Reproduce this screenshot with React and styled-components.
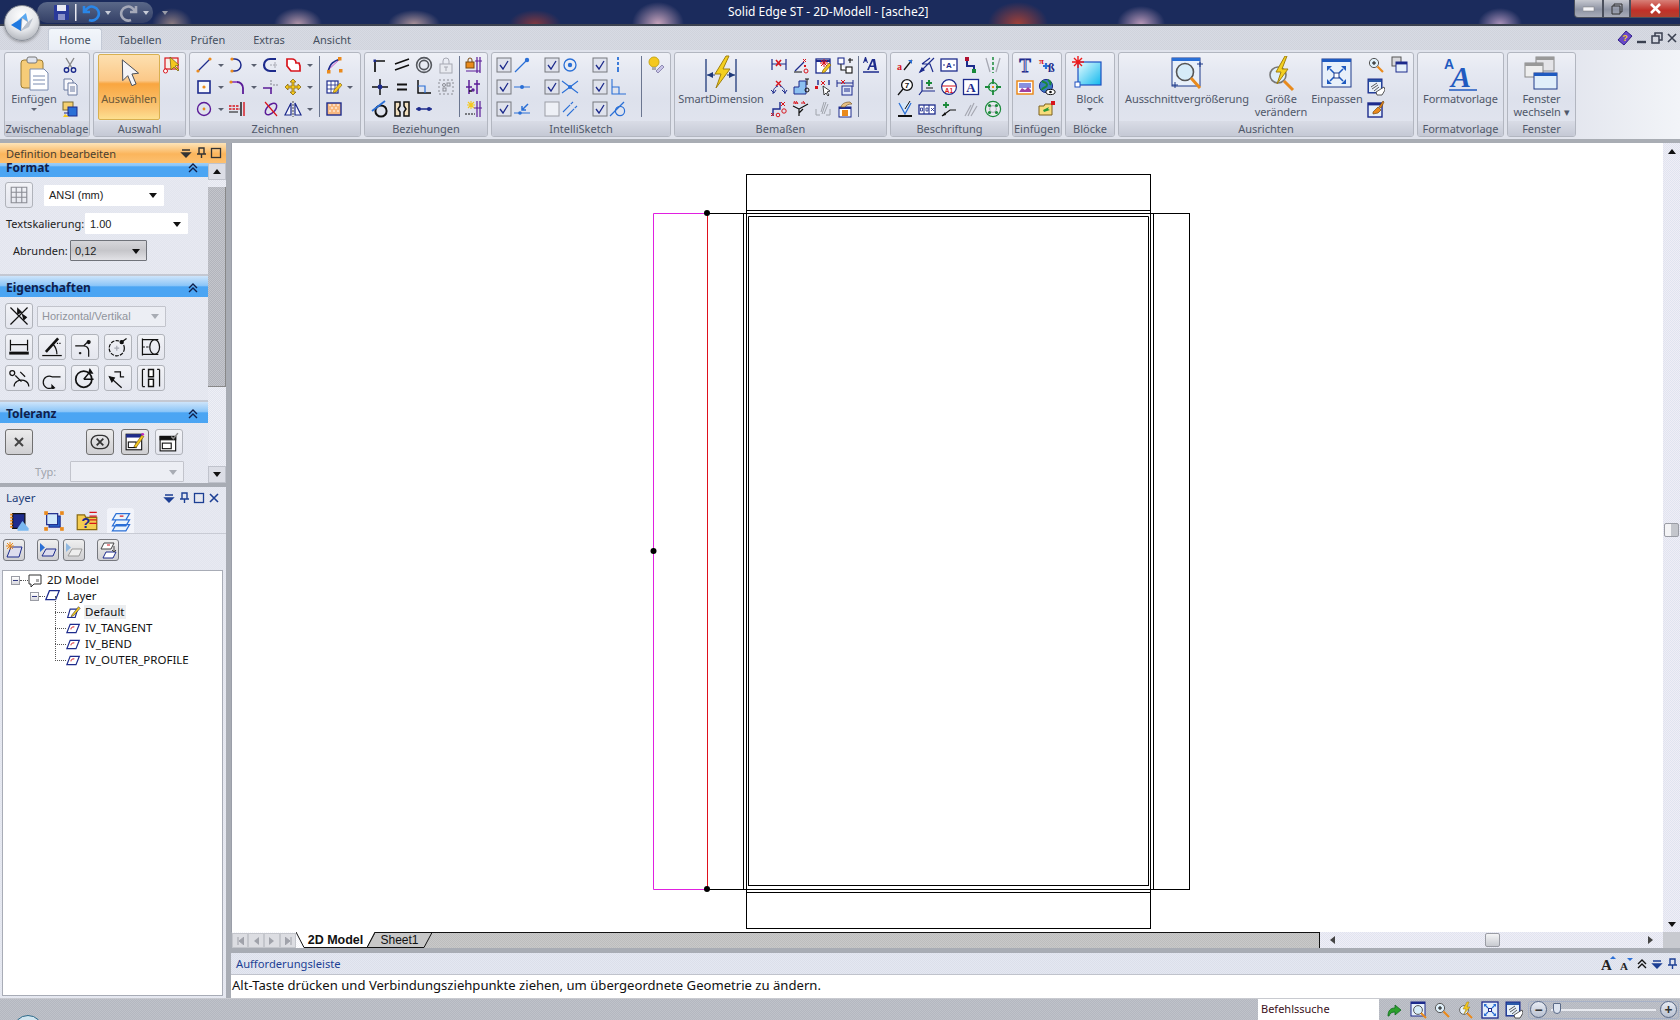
import React from 'react';
import styled, { createGlobalStyle } from 'styled-components';

// Farben der Icons
const N = '#1d2b8c';
const B = '#2a6fd6';
const R = '#d8141c';
const O = '#ea8a1c';
const P = '#5b1c98';
const K = '#111';
const G = '#a6a8b2';
const Y = '#f4c81e';
const T = '#1a8a3a';

const GlobalStyle = createGlobalStyle`
  html, body { margin: 0; height: 100%; overflow: hidden; }
  body { font-family: "Noto Sans", "Open Sans", sans-serif; font-size: 12px; color: #111; }
`;

const dither = (a, b) => `repeating-conic-gradient(${a} 0 25%, ${b} 0 50%) 0 0 / 2px 2px`;

const Page = styled.div`
  width: 1680px;
  height: 1020px;
  display: flex;
  flex-direction: column;
  position: relative;
  overflow: hidden;
  background: #d5d8e0;
`;

const TitleBar = styled.div`
  height: 26px;
  box-sizing: border-box;
  flex: none;
  display: grid;
  grid-template-columns: 728px 193px 1fr;
  border-bottom: 2px solid #3c4250;
  background:
    radial-gradient(ellipse 20px 16px at 172px 24px, #8a7a80 0, transparent 100%),
    radial-gradient(ellipse 24px 16px at 298px 24px, #b094a8 0, transparent 100%),
    radial-gradient(ellipse 26px 14px at 414px 24px, #a89098 0, transparent 100%),
    radial-gradient(ellipse 26px 14px at 535px 24px, #803840 0, transparent 100%),
    radial-gradient(ellipse 26px 22px at 658px 24px, #c8a4bc 0, transparent 100%),
    radial-gradient(ellipse 30px 22px at 1018px 24px, #a04038 0, transparent 100%),
    radial-gradient(ellipse 24px 18px at 1141px 24px, #b898b8 0, transparent 100%),
    radial-gradient(ellipse 22px 16px at 1500px 24px, #a890b8 0, transparent 100%),
    #1b2b5c;
`;

const QuickBar = styled.div`
  margin: 2px 0 1px 37px;
  width: 142px;
  height: 21px;
  display: flex;
  align-items: center;
  padding-left: 13px;
  gap: 3px;
`;

const QuickGlass = styled.div`
  display: flex;
  align-items: center;
  gap: 2px;
  width: 116px;
  height: 21px;
  margin-left: -13px;
  padding-left: 13px;
  border-radius: 10px;
  background: linear-gradient(#5a6888, #333f66);
  box-sizing: border-box;
`;

const QuickDrop = styled.span`
  width: 0;
  height: 0;
  border: 3px solid transparent;
  border-top: 4px solid ${({ $color }) => $color || '#c8ccd8'};
  margin: 4px 4px 0 2px;
`;

const WindowTitle = styled.div`
  color: #fff;
  font-size: 12px;
  line-height: 23px;
  text-align: center;
  white-space: nowrap;
`;

const WindowButtons = styled.div`
  display: flex;
  justify-content: flex-end;
  height: 18px;
`;

const WindowButton = styled.div`
  width: ${({ $w }) => $w}px;
  height: 18px;
  box-sizing: border-box;
  border: 1px solid #4a4f5c;
  border-top: none;
  display: flex;
  align-items: center;
  justify-content: center;
  background: ${({ $close }) =>
    $close ? 'linear-gradient(#d88078, #c03028 60%, #b04030)' : 'linear-gradient(#c6c8d0, #8e94a4 55%, #a8acb8)'};
  border-radius: ${({ $first }) => ($first ? '0 0 0 4px' : '0')};
`;

const Orb = styled.div`
  position: absolute;
  left: 4px;
  top: 5px;
  width: 36px;
  height: 36px;
  box-sizing: border-box;
  border-radius: 50%;
  border: 1px solid #8a8f98;
  background: radial-gradient(circle at 50% 30%, #fff 0, #e4e6ea 50%, #9a9ea6 100%);
  box-shadow: 0 1px 3px #5558;
  display: flex;
  align-items: center;
  justify-content: center;
  z-index: 3;
`;

const TabRow = styled.div`
  height: 24px;
  flex: none;
  display: flex;
  align-items: flex-end;
  padding-left: 48px;
  background: ${dither('#d8dbe4', '#d0d3dc')};
`;

const RibbonTab = styled.div`
  width: ${({ $w }) => $w}px;
  height: 22px;
  box-sizing: border-box;
  text-align: center;
  line-height: 23px;
  font-size: 11px;
  color: #46505f;
  border-radius: 3px 3px 0 0;
  ${({ $active }) => $active && `
    background: linear-gradient(#f2f6fb, #e9edf5);
    border: 1px solid #c4cad6;
    border-bottom: none;
    line-height: 21px;
  `}
`;

const HelpIcons = styled.div`
  margin-left: auto;
  display: flex;
  align-items: center;
  gap: 3px;
  height: 24px;
  padding-right: 2px;
`;

const Ribbon = styled.div`
  height: 93px;
  flex: none;
  box-sizing: border-box;
  display: flex;
  gap: 3px;
  padding: 2px 0 0 4px;
  border-bottom: 4px solid #a9adb4;
  background: linear-gradient(90deg, #e0e3ec 0, #e0e3ec 92%, #f2f4f8 100%);
`;

const Group = styled.div`
  width: ${({ $w }) => $w}px;
  height: 85px;
  box-sizing: border-box;
  flex: none;
  display: flex;
  flex-direction: column;
  border: 1px solid #b2b6c0;
  border-radius: 3px;
  background: linear-gradient(#eef0f6, #e6e9f2 20%, #dde1ec 55%, #e2e5ef);
  overflow: hidden;
`;

const GroupBody = styled.div`
  height: 68px;
  flex: none;
  display: flex;
  padding: 1px 0 0 ${({ $pad }) => $pad || 0}px;
  box-sizing: border-box;
`;

const GroupLabel = styled.div`
  flex: 1;
  text-align: center;
  font-size: 11px;
  line-height: 15px;
  color: #50586a;
  white-space: nowrap;
  background: linear-gradient(#d9dce6, #c5c9d5);
`;

const ToolCol = styled.div`
  width: ${({ $w }) => $w}px;
  flex: none;
  display: flex;
  flex-direction: column;
`;

const ToolCell = styled.div`
  height: 22px;
  display: flex;
  align-items: center;
  justify-content: center;
`;

const Caret = styled.span`
  width: 0;
  height: 0;
  border: 3px solid transparent;
  border-top: 3px solid #5a6070;
  margin-top: 3px;
`;

const Separator = styled.div`
  width: ${({ $w }) => $w}px;
  flex: none;
  display: flex;
  justify-content: center;
  padding-top: 2px;
  height: 61px;
  &::before {
    content: '';
    width: 1px;
    background: #6b7690;
  }
`;

const BigTool = styled.div`
  width: ${({ $w }) => $w}px;
  flex: none;
  display: flex;
  flex-direction: column;
  align-items: center;
  padding-top: 2px;
  box-sizing: border-box;
  ${({ $active }) => $active && `
    height: 66px;
    border: 1px solid #d8b050;
    border-radius: 2px;
    padding-top: 1px;
    background: linear-gradient(#fde0b0, #fbc888 40%, #f9a640 45%, #fbc878 85%, #fde090);
  `}
`;

const BigIcon = styled.div`
  height: 36px;
  display: flex;
  align-items: center;
  justify-content: center;
`;

const BigText = styled.div`
  font-size: 11px;
  letter-spacing: -0.1px;
  line-height: 13px;
  text-align: center;
  white-space: nowrap;
  color: ${({ $active }) => ($active ? '#6d5a3a' : '#50586a')};
`;

const Main = styled.div`
  flex: 1;
  display: flex;
  min-height: 0;
`;

const LeftColumn = styled.div`
  width: 231px;
  flex: none;
  display: flex;
  flex-direction: column;
  background: #a8acb4;
`;

const DockHeader = styled.div`
  width: 226px;
  height: 20px;
  flex: none;
  display: flex;
  align-items: center;
  padding: 0 4px 0 6px;
  box-sizing: border-box;
  font-size: 11px;
  color: #4a4030;
  background: linear-gradient(#fde4b8, #fbb55c 55%, #fcc070);
`;

const DockIcons = styled.div`
  margin-left: auto;
  display: flex;
  align-items: center;
  gap: 3px;
`;

const EditPanel = styled.div`
  width: 226px;
  height: 320px;
  flex: none;
  display: flex;
  overflow: hidden;
  background: ${dither('#e8eaf2', '#e2e5ee')};
`;

const PanelScroll = styled.div`
  flex: 1;
  overflow: hidden;
`;

const PanelContent = styled.div`
  margin-top: -9px;
`;

const SectionHead = styled.div`
  height: 23px;
  box-sizing: border-box;
  border-top: 2px solid #c4c8d2;
  display: flex;
  align-items: center;
  justify-content: space-between;
  padding: 2px 9px 0 6px;
  font-weight: 700;
  font-size: 12px;
  color: #10204c;
  background: linear-gradient(#cde4fa, #8cc6f8 45%, #4ba5f3 52%, #4ba5f3);
`;

const SectionBody = styled.div`
  height: ${({ $h }) => $h}px;
  box-sizing: border-box;
  padding: ${({ $top }) => $top}px 0 0 5px;
  display: flex;
  flex-direction: column;
`;

const FieldRow = styled.div`
  display: flex;
  align-items: center;
  height: ${({ $h }) => $h}px;
  margin-bottom: ${({ $mb }) => $mb || 0}px;
  padding-left: ${({ $pl }) => $pl || 0}px;
`;

const FieldLabel = styled.span`
  width: ${({ $w }) => $w}px;
  flex: none;
  font-size: 11px;
  white-space: nowrap;
  color: ${({ $off }) => ($off ? '#a0a4ac' : '#222')};
`;

const Select = styled.div`
  width: ${({ $w }) => $w}px;
  height: 21px;
  margin-left: ${({ $ml }) => $ml || 0}px;
  flex: none;
  box-sizing: border-box;
  display: flex;
  align-items: center;
  justify-content: space-between;
  padding: 0 6px 0 4px;
  font-family: "Liberation Sans", sans-serif;
  font-size: 11px;
  border-radius: 1px;
  background: ${({ $kind }) =>
    $kind === 'pressed' ? 'linear-gradient(#d6d6da, #c6c6ca 50%, #e2e2e6)' : $kind === 'off' ? '#eceef4' : '#fff'};
  border: 1px solid ${({ $kind }) => ($kind === 'pressed' ? '#70737a' : $kind === 'off' ? '#c2c4cc' : 'transparent')};
  color: ${({ $kind }) => ($kind === 'off' ? '#90949c' : '#222')};
`;

const SelectArrow = styled.span`
  width: 0;
  height: 0;
  border: 4px solid transparent;
  border-top: 5px solid ${({ $off }) => ($off ? '#a8acb4' : '#111')};
  margin-top: 5px;
`;

const SquareButton = styled.div`
  width: 28px;
  height: 26px;
  flex: none;
  box-sizing: border-box;
  display: flex;
  align-items: center;
  justify-content: center;
  border: 1px solid ${({ $dark }) => ($dark ? '#707070' : '#b0b3ba')};
  border-radius: 3px;
  background: ${({ $dark }) => ($dark ? 'linear-gradient(#ececec, #cfcfd2)' : 'linear-gradient(#f2f3f7, #e4e6ee)')};
  margin-left: ${({ $ml }) => $ml || 0}px;
`;

const ButtonRow = styled.div`
  display: flex;
  gap: 5px;
  margin-bottom: 5px;
`;

const PanelScrollbar = styled.div`
  width: 18px;
  flex: none;
  display: flex;
  flex-direction: column;
  background: ${dither('#eef0f6', '#e2e4ee')};
`;

const ScrollButton = styled.div`
  height: 17px;
  flex: none;
  display: flex;
  align-items: center;
  justify-content: center;
  background: #dcdee6;
  border: 1px solid #c0c3cc;
  box-sizing: border-box;
`;

const ScrollThumb = styled.div`
  height: 200px;
  margin-top: 7px;
  flex: none;
  background: ${dither('#c4c6cc', '#b2b4bc')};
  border-right: 1px solid #888;
  border-bottom: 1px solid #888;
  box-sizing: border-box;
`;

const ScrollFill = styled.div`
  flex: 1;
`;

const Arrow = styled.span`
  width: 0;
  height: 0;
  border: 4px solid transparent;
  ${({ $dir }) => ($dir === 'up' ? 'border-bottom: 5px solid #111; margin-bottom: 4px;' : '')}
  ${({ $dir }) => ($dir === 'down' ? 'border-top: 5px solid #111; margin-top: 4px;' : '')}
  ${({ $dir }) => ($dir === 'left' ? 'border-right: 5px solid #444; margin-right: 4px;' : '')}
  ${({ $dir }) => ($dir === 'right' ? 'border-left: 5px solid #444; margin-left: 4px;' : '')}
`;

const LayerPanel = styled.div`
  flex: 1;
  width: 226px;
  margin-top: 4px;
  display: flex;
  flex-direction: column;
  min-height: 0;
  background: ${dither('#e8eaf2', '#e2e5ee')};
`;

const LayerHeader = styled.div`
  height: 21px;
  flex: none;
  display: flex;
  align-items: center;
  padding: 0 6px;
  font-size: 11.5px;
  color: #24407a;
`;

const LayerTabs = styled.div`
  height: 26px;
  flex: none;
  display: flex;
  padding-left: 8px;
  border-bottom: 1px solid #c8cbd4;
  box-sizing: border-box;
`;

const LayerTab = styled.div`
  width: ${({ $w }) => $w}px;
  margin-left: ${({ $ml }) => $ml || 0}px;
  display: flex;
  align-items: center;
  justify-content: center;
  border-radius: 3px 3px 0 0;
  background: ${({ $active }) => ($active ? '#f2f4fa' : 'transparent')};
`;

const LayerTools = styled.div`
  height: 36px;
  flex: none;
  display: flex;
  align-items: flex-start;
  padding: 5px 0 0 3px;
  box-sizing: border-box;
`;

const ToolButton = styled.div`
  width: 22px;
  height: 22px;
  box-sizing: border-box;
  margin-left: ${({ $ml }) => $ml || 0}px;
  display: flex;
  align-items: center;
  justify-content: center;
  border: 1px solid #76787e;
  border-radius: 3px;
  background: linear-gradient(#efefef, #cfcfd2);
`;

const Tree = styled.div`
  flex: 1;
  margin: 0 3px 2px 2px;
  padding-top: 1px;
  background: #fff;
  border: 1px solid #a8acb6;
  box-sizing: border-box;
`;

const TreeRow = styled.div`
  height: 16px;
  display: flex;
  align-items: center;
  position: relative;
  padding-left: ${({ $indent }) => $indent}px;
  ${({ $guide }) => $guide && `
    &::before {
      content: '';
      position: absolute;
      left: 52px;
      top: -8px;
      height: ${$guide}px;
      border-left: 1px dotted #555;
    }
  `}
`;

const Expander = styled.span`
  width: 9px;
  height: 9px;
  box-sizing: border-box;
  border: 1px solid #9a9ca4;
  background: linear-gradient(#fff, #d8d8de);
  position: relative;
  flex: none;
  &::after {
    content: '';
    position: absolute;
    left: 1px;
    right: 1px;
    top: 3px;
    height: 1px;
    background: #333a80;
  }
`;

const Dots = styled.span`
  width: ${({ $w }) => $w}px;
  flex: none;
  border-top: 1px dotted #555;
`;

const TreeLabel = styled.span`
  margin-left: ${({ $ml }) => $ml}px;
  padding: 0 1px;
  font-size: 11.5px;
  line-height: 14px;
  background: ${({ $sel }) => ($sel ? '#eceef0' : 'transparent')};
`;

const RightColumn = styled.div`
  flex: 1;
  display: flex;
  flex-direction: column;
  min-width: 0;
  background: #a8acb4;
`;

const CanvasRow = styled.div`
  flex: 1;
  display: flex;
  min-height: 0;
`;

const Canvas = styled.div`
  flex: 1;
  background: #fff;
  border-left: 1px solid #9a9ea8;
  box-sizing: border-box;
  overflow: hidden;
`;

const VScroll = styled.div`
  width: 17px;
  flex: none;
  display: flex;
  flex-direction: column;
  align-items: stretch;
  background: ${dither('#f0eef6', '#e0e4f0')};
`;

const VScrollEnd = styled.div`
  height: 16px;
  display: flex;
  align-items: center;
  justify-content: center;
`;

const VThumb = styled.div`
  height: 14px;
  margin: 364px 1px 0;
  box-sizing: border-box;
  border: 1px solid #9a9ca4;
  border-radius: 2px;
  background: linear-gradient(90deg, #f4f4f6 50%, #c4c6cc 50%);
`;

const SheetStrip = styled.div`
  height: 16px;
  flex: none;
  display: flex;
  background: ${dither('#fff', '#f4f4fa')};
  margin-left: 1px;
`;

const SheetNav = styled.div`
  width: 16px;
  height: 15px;
  margin-top: 1px;
  flex: none;
  display: flex;
  align-items: center;
  justify-content: center;
  box-sizing: border-box;
  border: 1px solid #c4c6cc;
  background: #dcdde2;
`;

const SheetTab = styled.div`
  width: ${({ $w }) => $w}px;
  margin-left: ${({ $ml }) => $ml || 0}px;
  box-sizing: border-box;
  height: 16px;
  flex: none;
  position: relative;
  text-align: center;
  line-height: 16px;
  font-family: "Liberation Sans", sans-serif;
  font-size: ${({ $active }) => ($active ? '12.5px' : '12px')};
  font-weight: ${({ $active }) => ($active ? 700 : 400)};
  z-index: ${({ $active }) => ($active ? 2 : 1)};
  & > svg {
    position: absolute;
    left: 0;
    top: 0;
    z-index: -1;
  }
`;

const SheetFill = styled.div`
  flex: 1;
  border-top: 1px solid #111;
  border-right: 1px solid #111;
  margin-left: -8px;
  background: ${dither('#bdbdbd', '#c9c9c9')};
`;

const HScroll = styled.div`
  width: 343px;
  flex: none;
  display: flex;
  align-items: center;
  justify-content: space-between;
  padding: 0 6px;
  box-sizing: border-box;
  position: relative;
  background: ${dither('#f0eef6', '#e0e4f0')};
`;

const HThumb = styled.div`
  position: absolute;
  left: 165px;
  top: 1px;
  width: 15px;
  height: 14px;
  box-sizing: border-box;
  border: 1px solid #9a9ca4;
  border-radius: 2px;
  background: linear-gradient(#f4f4f6, #c8cad0);
`;

const Corner = styled.div`
  width: 17px;
  flex: none;
  background: #c8cad0;
`;

const PromptHead = styled.div`
  height: 22px;
  flex: none;
  margin-top: 5px;
  display: flex;
  align-items: center;
  padding: 0 2px 0 5px;
  font-size: 11.2px;
  color: #1c3f94;
  border-bottom: 1px solid #c0c3cc;
  box-sizing: border-box;
  background: ${dither('#e4e8f2', '#dcdfea')};
`;

const PromptIcons = styled.div`
  margin-left: auto;
  display: flex;
  align-items: center;
  gap: 3px;
`;

const PromptText = styled.div`
  height: 23px;
  flex: none;
  background: #fff;
  font-size: 13.1px;
  line-height: 21px;
  padding-left: 1px;
  white-space: nowrap;
  color: #111;
`;

const StatusBar = styled.div`
  height: 22px;
  flex: none;
  display: flex;
  align-items: center;
  justify-content: flex-end;
  position: relative;
  border-top: 1px solid #c8cad0;
  box-sizing: border-box;
  background: ${dither('#c0c3ca', '#b4b7c0')};
`;

const StartOrb = styled.div`
  position: absolute;
  left: 13px;
  top: 16px;
  width: 28px;
  height: 28px;
  border: 1px solid #2b6a8a;
  border-radius: 50%;
  background: #d0e4ee;
`;

const SearchBox = styled.div`
  width: 121px;
  height: 21px;
  margin-right: 6px;
  padding-left: 3px;
  box-sizing: border-box;
  background: #fff;
  color: #3a1020;
  font-size: 11px;
  line-height: 20px;
`;

const StatusIcons = styled.div`
  display: flex;
  align-items: center;
  gap: 6px;
`;

const ZoomSlider = styled.div`
  width: 151px;
  height: 18px;
  margin: 0 1px 0 5px;
  display: flex;
  align-items: center;
  position: relative;
  box-sizing: border-box;
  border: 1px solid #a8b2c8;
  border-radius: 3px;
  padding: 0 1px;
  justify-content: space-between;
`;

const SliderTrack = styled.div`
  position: absolute;
  left: 22px;
  right: 22px;
  top: 7px;
  height: 2px;
  background: #e8eaf0;
`;

const SliderKnob = styled.div`
  position: absolute;
  left: 24px;
  top: 1px;
  width: 8px;
  height: 11px;
  box-sizing: border-box;
  border: 1px solid #5a6a88;
  border-radius: 1px 1px 4px 4px;
  background: #dde4f0;
`;

const ZoomCircle = styled.div`
  width: 15px;
  height: 15px;
  border-radius: 50%;
  border: 1px solid #5a6a88;
  background: linear-gradient(#e8ecf4, #b8c0d0);
  display: flex;
  align-items: center;
  justify-content: center;
  font-weight: 700;
  font-size: 14px;
  line-height: 14px;
  color: #333;
  z-index: 1;
`;

// kleine Helfer für die Icons
const dot = (x, y, c = O, r = 1.6) => <circle cx={x} cy={y} r={r} fill={c} stroke="none" />;
const pen = <path d="M9 14l6-7 2 2-6 7-3 1z" fill={Y} stroke="#7a5a10" strokeWidth=".7" />;
const lens = (
  <g>
    <circle cx="7" cy="7" r="4.6" fill="#dff0fa" stroke="#555" />
    <path d="M10.5 10.5L16 16" stroke={O} strokeWidth="2.2" />
  </g>
);

const ICONS = {
  cut: <g stroke={N}><path d="M5 2l6 10M13 2L7 12" stroke="#888" strokeWidth="1.4" /><circle cx="5.5" cy="14" r="2.2" strokeWidth="1.4" /><circle cx="12.5" cy="14" r="2.2" strokeWidth="1.4" /></g>,
  copy: <g stroke="#6a7aa0" fill="#f8f8fc"><path d="M3 1h7l2 2v9H3z" /><path d="M7 5h7l2 2v10H7z" /><path d="M9 9h5M9 11h5M9 13h5" fill="none" /></g>,
  pasteSmall: <g><rect x="2" y="2" width="10" height="8" fill="#f5d070" stroke="#7a6a30" /><rect x="7" y="7" width="9" height="9" fill="#2a6fd6" stroke={N} /><path d="M3 13h5" stroke={N} /><path d="M4 14l-2 3h6z" fill={Y} stroke="none" /></g>,
  selectRed: <g><rect x="3" y="2" width="13" height="11" fill="#f8eee8" stroke={R} strokeWidth="1.2" /><circle cx="3.5" cy="15" r="2" stroke={R} fill="#fff" /><path d="M8 1l1 13 3-3 4 4 1-1-4-4 4-1z" fill={Y} stroke="#6a5a10" strokeWidth=".7" /></g>,

  line: <g><path d="M3 15L15 3" stroke={N} strokeWidth="1.3" />{dot(3, 15)}{dot(15, 3)}</g>,
  arc: <g><path d="M5 3h2a6 6 0 0 1 0 12H5" stroke={N} strokeWidth="1.5" />{dot(4, 3, O)}{dot(4, 15, O)}</g>,
  cshape: <g><path d="M14 3H8a6 6 0 0 0 0 12h6" stroke={N} strokeWidth="2.2" /><path d="M8 9h7" stroke={G} strokeDasharray="2 1" /><path d="M13 6v6" stroke={G} /></g>,
  redshape: <path d="M3 3h5a4 4 0 0 1 4 4h3l1 3v5H7L3 10z" stroke={R} strokeWidth="1.7" fill="#fff" />,
  curve: <g><path d="M2 15L16 2" stroke="#c028c0" strokeWidth=".8" /><path d="M3 16C5 7 9 5 15 3" stroke={N} strokeWidth="1.6" /><rect x="13" y="1" width="3.5" height="3.5" fill={O} /><rect x="2" y="14" width="3.5" height="3.5" fill={O} /><rect x="14" y="13" width="3.5" height="3.5" fill={O} /></g>,
  rectdot: <g><rect x="3" y="3" width="12" height="12" stroke={N} strokeWidth="1.6" fill="#f6f8fc" />{dot(9, 9)}</g>,
  fillet: <g><path d="M2 4h7a6 6 0 0 1 6 6v6" stroke={P} strokeWidth="1.8" /><path d="M2 4h7" stroke="#9a5cc8" strokeWidth="1.8" />{dot(3, 4)}</g>,
  trim: <g stroke={P} strokeWidth="1.6"><path d="M1 10h9M9 10v6" /><path d="M9 2v6" strokeDasharray="2 1" stroke={G} /><path d="M11 7h6" strokeDasharray="2 1" stroke={G} /></g>,
  move: <path d="M9 1l3 3h-2v4h4V6l3 3-3 3v-2h-4v4h2l-3 3-3-3h2v-4H4v2L1 9l3-3v2h4V4H6z" fill={Y} stroke="#8a6a10" strokeWidth=".8" />,
  tablePen: <g><rect x="2" y="3" width="11" height="12" fill="#fff" stroke={N} strokeWidth="1.2" /><path d="M2 7h11M2 11h11M6 3v12M10 3v12" stroke={N} strokeWidth=".8" /><path d="M9 12l6-7 2 2-6 7-3 1z" fill={Y} stroke="#7a5a10" strokeWidth=".6" /></g>,
  circle: <g><circle cx="9" cy="9" r="6.5" stroke={P} strokeWidth="1.4" />{dot(9, 9, O, 1.4)}</g>,
  extend: <g><path d="M1 6h10M1 9h11" stroke={R} strokeWidth="1.3" strokeDasharray="2.5 1" /><path d="M1 12h9" stroke={K} /><path d="M13 2v14" stroke={K} strokeWidth="1.4" /><path d="M16 2v14" stroke={R} strokeWidth="1.4" /></g>,
  slash: <g><ellipse cx="9" cy="9" rx="7" ry="4" transform="rotate(-45 9 9)" stroke={P} strokeWidth="1.5" /><path d="M3 2l12 14" stroke={R} strokeWidth="1.2" /></g>,
  mirror: <g stroke={N} strokeWidth="1.2"><path d="M7 3v12H1zM11 3v12h6z" fill="#f0f2fa" /><path d="M9 1v16" stroke="#666" strokeDasharray="2 1" /></g>,
  hatch: <g><rect x="2" y="3" width="14" height="12" fill="#f8b880" stroke={N} strokeWidth="1.4" /><path d="M4 5h2M8 5h2M12 5h2M6 8h2M10 8h2M4 11h2M8 11h2M12 11h2" stroke="#fff" /></g>,

  corner: <g stroke={K} strokeWidth="1.7"><path d="M4 16V5h10" /><rect x="2.5" y="3.5" width="2.5" height="2.5" fill={N} stroke="none" /></g>,
  parallel: <path d="M2 8l14-5M2 14l14-5" stroke={K} strokeWidth="1.5" />,
  rings: <g stroke="#55585e" strokeWidth="1.6"><circle cx="9" cy="9" r="7.4" /><circle cx="9" cy="9" r="4.6" /></g>,
  lockGray: <g stroke={G}><rect x="3" y="8" width="12" height="9" fill="#e8eaf0" /><path d="M6 8V5a3 3 0 0 1 6 0v3" /><path d="M7 11h4M9 11v4" /></g>,
  crossDots: <g><path d="M1 9h16M9 1v16" stroke={K} strokeWidth="1.5" />{dot(9, 9, N, 2.4)}</g>,
  equal: <path d="M4 6.5h10M4 11.5h10" stroke={K} strokeWidth="2.2" />,
  angle: <g><path d="M3 2v13h13" stroke={K} strokeWidth="1.5" /><path d="M3 8h7v7" stroke={B} strokeWidth="1.2" /></g>,
  dashRect: <g stroke="#8a8c94"><rect x="2" y="2" width="14" height="14" strokeDasharray="2 2" /><circle cx="7" cy="7" r="1.5" /><rect x="10" y="5" width="3" height="3" /><rect x="6" y="10" width="3" height="3" /></g>,
  tangent: <g><circle cx="10" cy="11" r="5.6" stroke={K} strokeWidth="2" /><path d="M1 11L14 1" stroke={B} strokeWidth="1.8" /></g>,
  symmetric: <g stroke={K} strokeWidth="1.5" fill="#f2e0c0"><path d="M2 2h5v4l-2 3 2 3v4H2zM16 2h-5v4l2 3-2 3v4h5z" /></g>,
  collinear: <g><path d="M1 9h16" stroke={N} strokeWidth="1.4" />{dot(4, 9, N, 2)}{dot(14, 9, N, 2)}</g>,
  lockPurple: <g><rect x="2" y="6" width="8" height="6" fill={O} stroke="#7a4a10" /><path d="M4 6V4a2 2 0 0 1 4 0v2" stroke="#7a4a10" /><path d="M13 1v16M16 1v16M2 15h14M11 5h7" stroke={P} strokeWidth="1.2" /></g>,
  barsPurple: <g stroke={P} strokeWidth="1.5"><path d="M5 2v14M13 2v14" /><path d="M2 9h6M10 6h6" /><path d="M5 13h3" stroke={K} /><circle cx="9" cy="12" r="1" /></g>,
  sunPurple: <g><path d="M7 1v8M3 5h8M4 2l6 6M10 2L4 8" stroke={Y} strokeWidth="1.1" /><path d="M13 1v16M16 1v16M10 8h8" stroke={P} strokeWidth="1.2" /><path d="M1 14h10" stroke={K} strokeDasharray="2 1" /></g>,

  checked: <g><rect x="2" y="2" width="14" height="14" fill="#dfe2ec" stroke="#76787e" /><path d="M5 9l3 4 5-8" stroke={N} strokeWidth="1.3" /></g>,
  unchecked: <rect x="2" y="2" width="14" height="14" fill="#eef0f6" stroke="#9c9ea6" />,
  isLine: <g><path d="M2 16L14 4" stroke={B} strokeWidth="1.2" />{dot(14, 4, B, 2.2)}</g>,
  isMid: <g><path d="M1 9h16" stroke={B} strokeWidth="1.2" />{dot(9, 9, B, 2)}</g>,
  isOn: <g><path d="M1 13h16" stroke={B} strokeWidth="1.2" />{dot(7, 13, B, 1.8)}<path d="M15 4L9 10M9 6v4h4" stroke={B} strokeWidth="1.5" /></g>,
  isCenter: <g><circle cx="9" cy="9" r="6" stroke={B} strokeWidth="1.3" />{dot(9, 9, B, 2.2)}</g>,
  isCross: <g><path d="M1 3l16 12M1 15L17 3" stroke={B} strokeWidth="1.1" />{dot(9, 9, B, 2)}</g>,
  isPar: <path d="M2 12L12 2M6 16L16 6" stroke={B} strokeWidth="1.1" strokeDasharray="10 1" />,
  isDots: <g stroke={B} strokeWidth="1.8"><path d="M9 1v3M9 6v3M9 11v5" /></g>,
  isPerp: <g stroke={B} strokeWidth="1.1"><path d="M3 1v15h14" /><path d="M3 9h7v7" /></g>,
  isTan: <g stroke={B} strokeWidth="1.2"><circle cx="11" cy="11" r="4.6" /><path d="M1 16L15 2" /></g>,
  bulb: <g><circle cx="7" cy="6" r="5" fill={Y} stroke="#c8a818" /><rect x="5" y="11" width="4" height="3" fill="#aaa" /><path d="M9 15l6-6 2 2-6 6z" fill="#c8c4e8" stroke="#706a9a" strokeWidth=".7" /></g>,

  d1: <g><path d="M2 3v11M16 3v11M2 8h14" stroke={N} strokeWidth="1.2" /><path d="M6 4l5 6M11 4l-5 6" stroke={R} strokeWidth="1.6" /></g>,
  d2: <g><path d="M3 15l9-9" stroke={N} strokeWidth="1.2" /><path d="M2 16h8" stroke={K} /><path d="M11 3l3 3M14 3l-3 3M12 9l2 2M14 9l-2 2" stroke={R} /><circle cx="14" cy="15" r="2" stroke={R} /></g>,
  d3: <g><rect x="2" y="3" width="14" height="14" stroke={N} strokeWidth="1.3" fill="#fff" /><path d="M2 5h14" stroke={N} strokeWidth="2" /><path d="M10 3v8M6 7h8M7 4l6 6M13 4l-6 6" stroke={R} />{pen}</g>,
  d4: <g stroke={K} strokeWidth="1.1" fill="#fff"><rect x="2" y="2" width="6" height="6" stroke={N} /><rect x="10" y="11" width="6" height="6" /><path d="M5 8v6h5M12 4h5M14 2v5" /></g>,
  d5: <g><path d="M6 3l5 5M11 3L6 8" stroke={R} strokeWidth="1.4" /><path d="M3 16C3 11 5 9 8 8M15 16c0-5-2-7-5-8M1 12l3 3 2-3M12 12l3 3 2-3" stroke={N} /></g>,
  d6: <g><path d="M2 16V9h5V3h7v13z" fill="#8cc0f0" stroke={N} /><path d="M15 1v6M13 1h4" stroke={K} /><circle cx="15" cy="12" r="2" stroke={K} /></g>,
  d7: <g><path d="M4 2v5M15 2v5M1 9h1" stroke={N} strokeWidth="1.4" /><rect x="1" y="8" width="3" height="3" fill={R} /><path d="M7 3l4 4M11 3L7 7" stroke={R} /><path d="M9 8l1 9 2-2 2 3 1-1-2-3 3-1z" fill="#fff" stroke={K} strokeWidth=".8" /></g>,
  d8: <g><path d="M1 2v7M17 2v7M1 5h16" stroke={N} /><path d="M5 2l4 4M9 2L5 6" stroke={R} /><rect x="6" y="8" width="10" height="9" fill="#dde4f6" stroke={N} /><path d="M8 11h6M8 13h6" stroke={N} /></g>,
  d9: <g><path d="M3 16V9h7V2" stroke={N} strokeWidth="1.4" /><path d="M11 2l4 4M15 2l-4 4" stroke={R} /><circle cx="14" cy="11" r="2.2" stroke={R} /><path d="M1 13l3 3M4 13l-3 3" stroke={R} /><circle cx="8" cy="15" r="1.8" stroke={R} /></g>,
  d10: <g><path d="M1 3h5M4 1l2 3M2 1l2 3M9 3h4M11 1l2 3" stroke={R} /><path d="M7 16V9l9-5M1 6l6 3M11 9l-4 4" stroke={K} strokeWidth="1.2" /></g>,
  d11: <g stroke="#a0a4ac"><path d="M2 15V9M16 15V9M2 15h4M12 15h4" /><path d="M8 14L12 2M10 14l4-10M7 12L10 2" /></g>,
  d12: <g><rect x="3" y="7" width="12" height="10" fill="#fff" stroke={N} /><rect x="3" y="7" width="12" height="2" fill={N} /><rect x="6" y="10" width="6" height="6" fill={O} /><path d="M5 7c1-4 5-5 9-5l2 2c-3 0-6 1-7 3z" fill="#e8c080" stroke="#7a5a30" strokeWidth=".7" /></g>,
  styleSmall: <g fill={N}><path d="M3 1l-2 6h1l.5-1.5h2L5 7h1L4 1z" /><path d="M10 3L5 14h2l1-3h4l.5 3h2.5L13 3zM8.8 9.5L11 5l.6 4.5z" /><path d="M1 16h16" stroke={N} strokeWidth="1.3" /></g>,

  b1: <g><path d="M8 14L16 4" stroke={K} strokeWidth="1.3" /><text x="1" y="14" fontSize="10" fontWeight="700" fill={R} stroke="none" fontFamily="Liberation Serif">a</text><path d="M12 4h4v4" fill={B} /></g>,
  b2: <g stroke={N} strokeWidth="1.2"><path d="M2 16L16 2M4 8h8l3 8M4 8l8-6" /><path d="M2 16l4-2-2-2z" fill={N} /></g>,
  b3: <g><rect x="1" y="3" width="16" height="12" fill="#fff" stroke={N} strokeWidth="1.3" /><path d="M3 9h2M13 9h2" stroke={N} /><text x="9" y="12" textAnchor="middle" fontSize="8" fill={N} stroke="none" fontFamily="Liberation Sans" fontWeight="700">A</text></g>,
  b4: <g><path d="M5 4v6h7v5" stroke={N} strokeWidth="2" /><rect x="3" y="1" width="4" height="4" fill="#b01030" /><rect x="10" y="13" width="4" height="4" fill={T} /></g>,
  b5: <g><path d="M2 2l4 14M16 2l-4 14" stroke={G} strokeWidth="1.3" /><path d="M9 1v16" stroke={T} strokeWidth="1.5" strokeDasharray="3 2" /></g>,
  b6: <g><circle cx="11" cy="7" r="5.4" fill="#fff" stroke={K} strokeWidth="1.3" /><path d="M7 11l-5 6" stroke={K} strokeWidth="1.3" /><text x="11" y="10" textAnchor="middle" fontSize="8" fontWeight="700" fill={K} stroke="none" fontFamily="Liberation Sans">7</text></g>,
  b7: <g><path d="M4 2v11l-3 4M4 13h13" stroke={N} strokeWidth="1.2" /><path d="M11 2v6M8 5h6" stroke={T} strokeWidth="2" /><path d="M8 10h7" stroke={K} /></g>,
  b8: <g><circle cx="9" cy="9" r="7.4" fill="#fff" stroke={N} strokeWidth="1.2" /><path d="M2 8h14" stroke={R} /><text x="9" y="15" textAnchor="middle" fontSize="6.5" fontWeight="700" fill={R} stroke="none" fontFamily="Liberation Sans">A1</text></g>,
  b9: <g><rect x="1.5" y="1.5" width="15" height="15" fill="#fff" stroke={N} strokeWidth="1.3" /><text x="9" y="14" textAnchor="middle" fontSize="13" fontWeight="700" fill={N} stroke="none" fontFamily="Liberation Serif">A</text></g>,
  b10: <g stroke={T} strokeWidth="1.4"><circle cx="9" cy="9" r="4.4" /><path d="M9 1v5M9 12v5M1 9h5M12 9h5" strokeWidth="1.8" /><path d="M8 9h2" stroke={O} strokeWidth="2" /></g>,
  b11: <g><path d="M3 3l6 11 6-11" stroke={B} strokeWidth="1.3" fill="#d8e8f8" /><path d="M2 16h14" stroke={K} strokeWidth="2" /><path d="M14 1L9 9" stroke={K} /></g>,
  b12: <g><rect x="1" y="5" width="16" height="9" fill="#fff" stroke={N} strokeWidth="1.3" /><path d="M6 5v9M11 5v9" stroke={N} /><path d="M2.5 8h2v3h-2zM8 8h2v3H8zM13 8l3 3M16 8l-3 3" stroke={N} strokeWidth=".8" /></g>,
  b13: <g><path d="M6 2v6M3 5h6" stroke={T} strokeWidth="1.8" /><path d="M2 16l8-6h6" stroke={K} strokeWidth="1.2" /><path d="M2 16l4-1-1-3z" fill={K} /></g>,
  b14: <g stroke={G} strokeWidth="1.2"><path d="M6 16L12 3M3 16L9 5M9 16l6-10" /></g>,
  b15: <g><circle cx="9" cy="9" r="7.6" fill="#e8eaf0" stroke={T} strokeWidth="1.2" /><circle cx="9" cy="9" r="3.4" stroke={G} />{dot(5.5, 5.5, T)}{dot(12.5, 5.5, T)}{dot(5.5, 12.5, T)}{dot(12.5, 12.5, T)}</g>,

  textT: <text x="9" y="16" textAnchor="middle" fontSize="19" fill="#fff" stroke={N} strokeWidth=".9" fontFamily="Liberation Serif">T</text>,
  piBeta: <g><text x="1" y="8" fontSize="9" fontWeight="700" fill={R} stroke="none" fontFamily="Liberation Serif">π</text><path d="M5 10h6M8 7v6" stroke={B} strokeWidth="2.2" /><text x="10" y="16" fontSize="12" fontWeight="700" fill={N} stroke="none" fontFamily="Liberation Serif">ß</text></g>,
  picture: <g><rect x="1" y="3" width="16" height="13" fill="#fff" stroke={O} strokeWidth="1.5" /><rect x="3" y="5" width="12" height="5" fill="#8890e0" /><path d="M3 14l3-4 3 2 3-3 3 3v2z" fill="#a040a0" /></g>,
  globe: <g><circle cx="8" cy="8" r="6.6" fill="#3a7ac0" stroke={N} /><path d="M4 3c2 2 5 1 5 4s-5 2-5 5M10 2c2 1 3 3 2 5" stroke={T} strokeWidth="2" /><ellipse cx="12.5" cy="14" rx="4.6" ry="2.6" fill="#fff" stroke={K} /><circle cx="12.5" cy="14" r="1.3" fill={K} /></g>,
  folderRed: <g><path d="M1 6h5l1-2h7v11H1z" fill="#f8dc7c" stroke="#7a6020" /><path d="M5 10l6-3-1 2 2 1-6 2z" fill="#2a9a3a" /><rect x="13" y="1" width="4" height="4" fill={R} /></g>,

  zoomPM: <g>{lens}<path d="M5 7h4M7 5v4" stroke={K} /></g>,
  windowsSm: <g><rect x="2" y="1" width="9" height="9" fill="#d8d8dc" stroke="#555" /><rect x="6" y="6" width="11" height="10" fill="#e6f0fa" stroke={N} /><rect x="6" y="6" width="11" height="2.4" fill={N} /></g>,
  handWin: <g><rect x="1" y="1" width="14" height="14" fill="#2a5aa8" stroke={N} /><rect x="2" y="4" width="12" height="10" fill="#e6f0fa" /><path d="M4 9l6-4M5 11l6-4M7 13l5-4M9 14l8-5 1 3-3 5h-5z" stroke="#333" fill="#fff" strokeWidth=".8" /></g>,
  brushWin: <g><rect x="1" y="3" width="14" height="14" fill="#e6f0fa" stroke={N} strokeWidth="1.4" /><rect x="1" y="3" width="14" height="2.4" fill={N} /><path d="M6 12l5-5 3 3-3 3-5 1zM12 7l4-6 1 1-3 6z" fill={O} stroke="#7a4a10" strokeWidth=".7" /></g>,

  redoGreen: <path d="M3 15c0-5 2-8 7-8V4l6 5-6 5v-3c-3 0-5 1-6 4z" fill="#2ca02c" stroke="#106a20" strokeWidth=".8" />,
  zoomArea: <g><rect x="2" y="1" width="14" height="14" fill="#e6f0fa" stroke={N} /><rect x="2" y="1" width="14" height="2" fill={N} /><circle cx="9" cy="9" r="4.4" fill="#d8eef8" stroke="#555" /><path d="M12 12l5 5" stroke={O} strokeWidth="2" /></g>,
  zoomBolt: <g><circle cx="7" cy="9" r="4.4" fill="#e8f4fc" stroke="#666" /><path d="M10 12l5 5" stroke={O} strokeWidth="2" /><path d="M10 1L6 8h3l-2 5 6-7h-3l2-5z" fill={Y} stroke="#a08010" strokeWidth=".5" /></g>,
  fitSm: <g><rect x="1" y="1" width="16" height="16" fill="#e4eefa" stroke={N} strokeWidth="1.3" /><path d="M4 4l3 3M14 4l-3 3M4 14l3-3M14 14l-3-3" stroke={B} strokeWidth="1.2" /><path d="M3 3h3L3 6zM15 3h-3l3 3zM3 15h3l-3-3zM15 15h-3l3-3z" fill={B} /><rect x="7.5" y="7.5" width="3" height="3" stroke={N} fill="#fff" /></g>,

  gridBtn: <g stroke="#8a8c94"><path d="M2 2h14v14H2zM2 6.5h14M2 11h14M6.5 2v14M11.5 2v14" /></g>,
  pickDim: <g stroke={K}><path d="M2 2l14 14M16 2L2 16" /><path d="M8 3l3 3-3 1z" fill={K} /><path d="M12 8l3 2-2 2z" fill={K} /></g>,
  p1: <g stroke={K}><path d="M2 3v9M16 3v9M2 7h14" /><path d="M1 14h16" strokeWidth="2.4" /></g>,
  p2: <g stroke={K}><path d="M1 16h16" /><path d="M4 13L14 2" strokeWidth="2.2" /><path d="M10 7c2 2 3 4 3 8" /><path d="M13 6h3" strokeDasharray="1 1" /></g>,
  p3: <g stroke={K}><path d="M1 8h7a4 4 0 0 1 4 4v5" /><path d="M4 14h2M5 13v2" /><path d="M8 8l3-3" /><circle cx="12" cy="5" r="1.2" fill={K} /></g>,
  p4: <g stroke={K}><circle cx="8" cy="10" r="6.2" strokeDasharray="3 1" /><path d="M6 10h4M8 8v4" stroke={G} /><path d="M12 5l4-3" /><circle cx="12" cy="5" r="1.3" fill={K} /></g>,
  p5: <g stroke={K}><path d="M2 2v14M2 3h13M2 15h13" /><ellipse cx="12" cy="9" rx="4" ry="6" /><path d="M2 9h6" strokeDasharray="2 1" /></g>,
  p6: <g stroke={K}><circle cx="3.5" cy="5" r="2" /><path d="M6 7l5 5M10 4l4 4" /><path d="M5 16c0-4 4-6 8-5 3 1 4 3 4 5" /></g>,
  p7: <g stroke={K}><path d="M16 8H9a5 5 0 1 0 0 9" /><path d="M9 15l2 2-2 1z" fill={K} /></g>,
  p8: <g stroke={K}><circle cx="8" cy="10" r="6.6" strokeWidth="1.4" /><path d="M8 10l5-6M8 10h8" strokeWidth="1.2" /><path d="M13 2l2 3-3 0z" fill={K} /></g>,
  p9: <g stroke={K}><path d="M6 4h5v4h3" /><path d="M2 8l10 9" /><path d="M2 8l4 1-2 3z" fill={K} /></g>,
  p10: <g stroke={K}><path d="M2 2v14M16 2v14M2 2h2M2 16h2M14 2h2" /><path d="M7 2h4v6H7zM7 10h4v6H7z" fill="#fff" strokeWidth="1.2" /></g>,
  tolX: <path d="M5 5l8 8M13 5l-8 8" stroke="#444" strokeWidth="2" />,
  tolOval: <g stroke="#333" strokeWidth="1.2"><rect x="1" y="3" width="16" height="12" rx="6" /><path d="M6 6l6 6M12 6l-6 6" strokeWidth="1.6" /></g>,
  tolEdit: <g><rect x="1" y="2" width="14" height="14" fill="#fff" stroke={K} /><rect x="1" y="2" width="14" height="3" fill={N} /><rect x="3" y="9" width="7" height="5" stroke={K} /><path d="M8 13L15 3l2 1-7 10z" fill={Y} stroke="#7a5a10" strokeWidth=".6" /><circle cx="16" cy="2" r="1.2" fill="#c028c0" /></g>,
  tolWin: <g stroke={K}><rect x="1" y="4" width="14" height="13" fill="#fff" /><rect x="1" y="4" width="14" height="3" fill={K} /><rect x="3" y="10" width="8" height="5" /><path d="M11 4l2 2 4-5" stroke="#888" strokeWidth="1.4" /></g>,

  ltBook: <g><path d="M3 3h10v12H3z" fill={N} stroke={K} /><path d="M2 3v12" stroke={O} strokeWidth="2" strokeDasharray="1.5 1" /><path d="M7 15l4-6 5 6v2H7z" fill="#7ab8f0" /></g>,
  ltSel: <g><rect x="5" y="5" width="9" height="9" fill="#2a6fd6" stroke={N} /><rect x="3" y="3" width="9" height="9" fill="#d0e8fa" stroke={N} /><rect x="1" y="1" width="3" height="3" fill={O} /><rect x="14" y="1" width="3" height="3" fill={O} /><rect x="1" y="14" width="3" height="3" fill={O} /><rect x="14" y="14" width="3" height="3" fill={O} /></g>,
  ltHelp: <g><path d="M1 4h6l1 2h9v10H1z" fill="#f4cc50" stroke="#8a6a10" /><path d="M11 2h6M11 5h6M11 8h6M11 11h6" stroke={R} /><text x="8" y="15" textAnchor="middle" fontSize="12" fontWeight="700" fill={N} stroke="none" fontFamily="Liberation Sans">?</text></g>,
  ltLayers: <g stroke={B} fill="#eaf4fc"><path d="M5 12h11l-3 5H2zM5 8h11l-3 5H2zM5 3h11l-3 5H2z" /><path d="M8 5h3" stroke={R} /></g>,
  layerNew: <g><path d="M6 6h11l-3 10H2z" fill="#dde" stroke={N} /><path d="M5 1v8M1 5h8M2 2l6 6M8 2L2 8" stroke={O} /></g>,
  layerShow: <g><path d="M1 2v9l5-4.5z" fill={B} /><path d="M7 8h10l-3 7H3z" fill="#dde" stroke={N} /></g>,
  layerHide: <g><path d="M1 2v9l5-4.5z" fill="#90b8e0" /><path d="M7 8h10l-3 7H3z" fill="#eee" stroke="#999" /></g>,
  layerMove: <g><path d="M5 2h10l-3 6H2z" fill="#fff" stroke="#444" /><path d="M7 11h10l-3 6H4z" fill="#fff" stroke={N} /><path d="M8 4h3" stroke={R} /><path d="M15 5v6M13 9l2 2 2-2" stroke="#444" /></g>,

  treeModel: <g stroke="#333"><path d="M1 2h12v9H6l-3 3v-3H1z" fill="#fff" /><rect x="8" y="6" width="3" height="3" fill="#aaa" stroke="none" /></g>,
  treeLayer: <path d="M5 3h11l-4 10H1z" stroke={N} strokeWidth="1.4" fill="#fff" />,
  treeActive: <g><path d="M5 5h9l-3 10H2z" stroke={N} strokeWidth="1.4" fill="#fff" /><path d="M7 12L15 2l2 2-8 9-3 1z" fill={Y} stroke="#333" strokeWidth=".7" /></g>,
  treeItem: <g><path d="M5 4h11l-4 10H1z" stroke={N} strokeWidth="1.4" fill="#fff" /><path d="M6 10c0-2 1-3 4-3" stroke={R} strokeWidth="1.2" /></g>,

  menuDown: <path d="M2 3h8M2 6h8l-4 4z" stroke="currentColor" strokeWidth="1.4" fill="currentColor" />,
  pin: <path d="M4 1h5v6H4zM2 7h9M6.5 7v4" stroke="currentColor" strokeWidth="1.4" />,
  maxBox: <rect x="1.5" y="1.5" width="9" height="9" stroke="currentColor" strokeWidth="1.3" />,
  closeX: <path d="M2 2l8 8M10 2l-8 8" stroke="currentColor" strokeWidth="1.6" />,
  chevrons: <path d="M2 6l4-4 4 4M2 10l4-4 4 4" stroke="currentColor" strokeWidth="1.4" />,
  minBar: <path d="M1 10h9" stroke="currentColor" strokeWidth="2.4" />,
  restore: <path d="M4 4V1h7v7H8M1 4h7v7H1z" stroke="currentColor" strokeWidth="1.5" />,
};

const Svg = styled.svg`
  flex: none;
  display: block;
  color: ${({ $color }) => $color || 'inherit'};
`;

const Icon = ({ name, size = 18, box = 18, color }) => (
  <Svg width={size} height={size} viewBox={`0 0 ${box} ${box}`} fill="none" $color={color}>
    {ICONS[name]}
  </Svg>
);

// große Icons der Ribbon
const BigPaste = () => (
  <Svg width="36" height="36" viewBox="0 0 36 36" fill="none">
    <rect x="5" y="4" width="22" height="28" rx="3" fill="#f6cc78" stroke="#9a7a30" />
    <rect x="11" y="1" width="10" height="6" rx="2" fill="#e0e4ee" stroke="#777" />
    <path d="M14 13h14l4 4v17H14z" fill="#fff" stroke="#7a8cb0" />
    <path d="M17 20h12M17 24h12M17 28h12" stroke="#7a8cb0" />
  </Svg>
);

const BigCursor = () => (
  <Svg width="30" height="32" viewBox="0 0 36 36" fill="none">
    <path d="M10 1l.5 25 6-6 5 12 5-2-5-12 8-1z" fill="#f4f4f8" stroke="#4a4e58" strokeWidth="1.2" />
  </Svg>
);

const BigSmartDim = () => (
  <Svg width="36" height="36" viewBox="0 0 36 36" fill="none" style={{ overflow: 'visible' }}>
    <g transform="translate(3 0)">
      <path d="M0 3v33M30 3v33" stroke="#1f3a7a" strokeWidth="1.3" />
      <path d="M1 19h8M29 19h-8" stroke="#1f3a7a" />
      <path d="M1 19l6-3v6zM29 19l-6-3v6z" fill="#1f3a7a" />
      <path d="M20 0L9 18h6l-5 14 14-19h-7l6-13z" fill="#f4d020" stroke="#a08010" />
    </g>
  </Svg>
);

const BigBlock = () => (
  <Svg width="36" height="36" viewBox="0 0 36 36" fill="none">
    <defs>
      <linearGradient id="blk" x1="0" y1="0" x2="1" y2="1">
        <stop offset="0" stopColor="#e8fcff" />
        <stop offset="1" stopColor="#10b8ee" />
      </linearGradient>
    </defs>
    <rect x="6" y="6" width="23" height="23" fill="url(#blk)" stroke="#1f50c0" strokeWidth="1.2" />
    <path d="M6 0v12M0 6h12M2 2l8 8M10 2l-8 8" stroke="#ee1a1a" strokeWidth="1.4" />
    <rect x="3" y="26" width="5" height="5" fill="#fff" stroke="#1f50c0" />
  </Svg>
);

const BigZoomArea = () => (
  <Svg width="36" height="36" viewBox="0 0 36 36" fill="none">
    <rect x="3" y="2" width="28" height="28" fill="#e8f0fa" stroke="#1f3a8a" />
    <rect x="3" y="2" width="28" height="3" fill="#2a6fd6" />
    <circle cx="16" cy="16" r="8.5" fill="#d6ecf8" stroke="#555" strokeWidth="1.6" />
    <path d="M22 22l9 10" stroke="#e88a1c" strokeWidth="3" />
    <path d="M3 29h6M6 26v6M31 6v5M28 8h6" stroke="#1f3a8a" />
  </Svg>
);

const BigResize = () => (
  <Svg width="36" height="36" viewBox="0 0 36 36" fill="none">
    <circle cx="15" cy="19" r="8" fill="#dfeefa" stroke="#777" strokeWidth="1.6" />
    <path d="M21 25l9 9" stroke="#e88a1c" strokeWidth="3" />
    <path d="M22 0L13 16h5l-4 12 11-15h-6l5-13z" fill="#f4d020" stroke="#a08010" />
  </Svg>
);

const BigFit = () => (
  <Svg width="36" height="36" viewBox="0 0 36 36" fill="none">
    <rect x="3" y="3" width="29" height="28" fill="#e8f0fa" stroke="#1f3a8a" />
    <rect x="3" y="3" width="29" height="3" fill="#1f5ac0" />
    <path d="M11 13l4 4M24 13l-4 4M11 25l4-4M24 25l-4-4" stroke="#1f5ac0" strokeWidth="1.6" />
    <path d="M8 10h5l-5 5zM27 10h-5l5 5zM8 28h5l-5-5zM27 28h-5l5-5z" fill="#1f5ac0" />
    <rect x="15" y="17" width="5" height="5" fill="#fff" stroke="#1f3a8a" />
  </Svg>
);

const BigStyle = () => (
  <Svg width="36" height="36" viewBox="0 0 36 36" fill="none">
    <text x="1" y="13" fontSize="14" fontWeight="700" fill="#1f5ac0" fontFamily="Liberation Sans">A</text>
    <text x="8" y="31" fontSize="30" fontStyle="italic" fontWeight="700" fill="#1f5ac0" fontFamily="Liberation Serif">A</text>
    <path d="M6 34h28" stroke="#1f5ac0" strokeWidth="1.4" />
  </Svg>
);

const BigWindows = () => (
  <Svg width="36" height="36" viewBox="0 0 36 36" fill="none">
    <rect x="12" y="1" width="18" height="14" fill="#e4e4e8" stroke="#888" />
    <rect x="12" y="1" width="18" height="3" fill="#999" />
    <rect x="1" y="7" width="18" height="14" fill="#eee" stroke="#888" />
    <rect x="1" y="7" width="18" height="3" fill="#999" />
    <rect x="10" y="17" width="23" height="16" fill="#e0eefa" stroke="#1f3a8a" />
    <rect x="10" y="17" width="23" height="3" fill="#1f5ac0" />
  </Svg>
);

// Spalten: Breite und bis zu drei Einträge ('v' = Dropdown-Pfeil, '|' = Trennlinie)
const ToolColumns = ({ cols }) =>
  cols.map((col, i) => {
    if (col[0] === '|') return <Separator key={i} $w={col[1]} />;
    const [w, ...items] = col;
    return (
      <ToolCol key={i} $w={w}>
        {items.map((item, j) => (
          <ToolCell key={j}>
            {item === 'v' ? <Caret /> : item ? <Icon name={item} /> : null}
          </ToolCell>
        ))}
      </ToolCol>
    );
  });

const Big = ({ w, lines, icon, caret, active }) => (
  <BigTool $w={w} $active={active}>
    <BigIcon>{icon}</BigIcon>
    {lines.map((line) => (
      <BigText key={line} $active={active}>{line}</BigText>
    ))}
    {caret && <Caret />}
  </BigTool>
);

const drawCols = [
  [22, 'line', 'rectdot', 'circle'], [11, 'v', 'v', 'v'],
  [22, 'arc', 'fillet', 'extend'], [12, 'v', 'v'],
  [22, 'cshape', 'trim', 'slash'],
  [22, 'redshape', 'move', 'mirror'], [12, 'v', 'v', 'v'],
  ['|', 6],
  [24, 'curve', 'tablePen', 'hatch'], [8, null, 'v'],
];

const relationCols = [
  [22, 'corner', 'crossDots', 'tangent'],
  [22, 'parallel', 'equal', 'symmetric'],
  [22, 'rings', 'angle', 'collinear'],
  [22, 'lockGray', 'dashRect'],
  ['|', 5],
  [22, 'lockPurple', 'barsPurple', 'sunPurple'],
];

const intelliCols = [
  [18, 'checked', 'checked', 'checked'],
  [18, 'isLine', 'isMid', 'isOn'],
  [12],
  [18, 'checked', 'checked', 'unchecked'],
  [18, 'isCenter', 'isCross', 'isPar'],
  [12],
  [18, 'checked', 'checked', 'checked'],
  [18, 'isDots', 'isPerp', 'isTan'],
  [10],
  ['|', 8],
  [22, 'bulb'],
];

const dimCols = [
  [2],
  [22, 'd1', 'd5', 'd9'],
  [22, 'd2', 'd6', 'd10'],
  [22, 'd3', 'd7', 'd11'],
  [22, 'd4', 'd8', 'd12'],
  ['|', 4],
  [22, 'styleSmall'],
];

const labelCols = [
  [22, 'b1', 'b6', 'b11'],
  [22, 'b2', 'b7', 'b12'],
  [22, 'b3', 'b8', 'b13'],
  [22, 'b4', 'b9', 'b14'],
  [22, 'b5', 'b10', 'b15'],
];

const treeItems = ['IV_TANGENT', 'IV_BEND', 'IV_OUTER_PROFILE'];

const App = () => (
  <Page>
    <GlobalStyle />
    <Orb>
      <Svg width="28" height="28" viewBox="0 0 28 28" fill="none">
        <path d="M3 16L14 9l-1 13z" fill="#1e78e0" />
        <path d="M9 12l9-8 2 9-6-4z" fill="#5aa8f0" />
        <path d="M14 9l6 4-7 9z" fill="#f6f8fc" stroke="#8a8f98" strokeWidth=".5" />
        <path d="M20 13l5-4-4 9-8 4z" fill="#b8c0cc" />
      </Svg>
    </Orb>
    <TitleBar>
      <QuickBar>
        <QuickGlass>
          <Svg width="17" height="17" viewBox="0 0 17 17" style={{ marginLeft: 3 }}>
            <rect x="1" y="1" width="15" height="15" rx="1" fill="#2a3a9a" />
            <rect x="4" y="1" width="9" height="6" fill="#e8eaf4" />
            <rect x="5" y="10" width="7" height="6" fill="#8890c8" />
          </Svg>
          <Svg width="2" height="17" viewBox="0 0 2 17" style={{ marginLeft: 3 }}>
            <rect width="1.5" height="17" fill="#e8e8f0" />
          </Svg>
          <Svg width="20" height="18" viewBox="0 0 20 18" fill="none" style={{ marginLeft: 2 }}>
            <path d="M3 2v6h6M4 8a7 7 0 1 1 4 8" stroke="#2a86e8" strokeWidth="2.6" />
          </Svg>
          <QuickDrop />
          <Svg width="20" height="18" viewBox="0 0 20 18" fill="none" style={{ marginLeft: 2 }}>
            <path d="M17 2v6h-6M16 8a7 7 0 1 0-4 8" stroke="#a4a8b8" strokeWidth="2.6" />
          </Svg>
          <QuickDrop />
        </QuickGlass>
        <QuickDrop $color="#9a9ca8" style={{ marginLeft: 6 }} />
      </QuickBar>
      <WindowTitle>Solid Edge ST - 2D-Modell - [asche2]</WindowTitle>
      <WindowButtons>
        <WindowButton $w={29} $first>
          <Svg width="12" height="6" viewBox="0 0 12 6"><rect y="1" width="11" height="4" fill="#f4f4f8" stroke="#777" strokeWidth=".5" /></Svg>
        </WindowButton>
        <WindowButton $w={27}>
          <Svg width="12" height="12" viewBox="0 0 12 12" fill="none"><path d="M3 3V1h8v8H9M1 3h8v8H1z" stroke="#333" /></Svg>
        </WindowButton>
        <WindowButton $w={50} $close>
          <Svg width="13" height="11" viewBox="0 0 13 11" fill="none"><path d="M2 1l9 9M11 1l-9 9" stroke="#fff" strokeWidth="2.6" /></Svg>
        </WindowButton>
      </WindowButtons>
    </TitleBar>

    <TabRow>
      <RibbonTab $w={54} $active>Home</RibbonTab>
      <RibbonTab $w={76}>Tabellen</RibbonTab>
      <RibbonTab $w={60}>Prüfen</RibbonTab>
      <RibbonTab $w={62}>Extras</RibbonTab>
      <RibbonTab $w={64}>Ansicht</RibbonTab>
      <HelpIcons>
        <Svg width="16" height="16" viewBox="0 0 16 16">
          <path d="M1 10L9 1l6 5-8 9z" fill="#6a48c8" stroke="#30208a" />
          <text x="8" y="11" fontSize="9" fontWeight="700" fill="#f4c81e" textAnchor="middle" fontFamily="Liberation Sans">?</text>
        </Svg>
        <Icon name="minBar" size={12} box={12} color="#3a4050" />
        <Icon name="restore" size={12} box={12} color="#3a4050" />
        <Icon name="closeX" size={12} box={12} color="#3a4050" />
      </HelpIcons>
    </TabRow>

    <Ribbon>
      <Group $w={86}>
        <GroupBody $pad={4}>
          <Big w={50} lines={['Einfügen']} icon={<BigPaste />} caret />
          <ToolColumns cols={[[22, 'cut', 'copy', 'pasteSmall']]} />
        </GroupBody>
        <GroupLabel>Zwischenablage</GroupLabel>
      </Group>
      <Group $w={93}>
        <GroupBody $pad={4}>
          <Big w={62} lines={['Auswählen']} icon={<BigCursor />} active />
          <ToolColumns cols={[[22, 'selectRed']]} />
        </GroupBody>
        <GroupLabel>Auswahl</GroupLabel>
      </Group>
      <Group $w={172}>
        <GroupBody $pad={3}><ToolColumns cols={drawCols} /></GroupBody>
        <GroupLabel>Zeichnen</GroupLabel>
      </Group>
      <Group $w={124}>
        <GroupBody $pad={4}><ToolColumns cols={relationCols} /></GroupBody>
        <GroupLabel>Beziehungen</GroupLabel>
      </Group>
      <Group $w={180}>
        <GroupBody $pad={3}><ToolColumns cols={intelliCols} /></GroupBody>
        <GroupLabel>IntelliSketch</GroupLabel>
      </Group>
      <Group $w={213}>
        <GroupBody $pad={1}>
          <Big w={90} lines={['SmartDimension']} icon={<BigSmartDim />} />
          <ToolColumns cols={dimCols} />
        </GroupBody>
        <GroupLabel>Bemaßen</GroupLabel>
      </Group>
      <Group $w={119}>
        <GroupBody $pad={3}><ToolColumns cols={labelCols} /></GroupBody>
        <GroupLabel>Beschriftung</GroupLabel>
      </Group>
      <Group $w={50}>
        <GroupBody $pad={1}>
          <ToolColumns cols={[[22, 'textT', 'picture'], [22, 'piBeta', 'globe', 'folderRed']]} />
        </GroupBody>
        <GroupLabel>Einfügen</GroupLabel>
      </Group>
      <Group $w={50}>
        <GroupBody>
          <Big w={48} lines={['Block']} icon={<BigBlock />} caret />
        </GroupBody>
        <GroupLabel>Blöcke</GroupLabel>
      </Group>
      <Group $w={296}>
        <GroupBody $pad={1}>
          <Big w={134} lines={['Ausschnittvergrößerung']} icon={<BigZoomArea />} />
          <Big w={54} lines={['Größe', 'verändern']} icon={<BigResize />} />
          <Big w={58} lines={['Einpassen']} icon={<BigFit />} />
          <ToolColumns cols={[[20, 'zoomPM', 'handWin', 'brushWin'], [26, 'windowsSm']]} />
        </GroupBody>
        <GroupLabel>Ausrichten</GroupLabel>
      </Group>
      <Group $w={87}>
        <GroupBody>
          <Big w={85} lines={['Formatvorlage']} icon={<BigStyle />} />
        </GroupBody>
        <GroupLabel>Formatvorlage</GroupLabel>
      </Group>
      <Group $w={69}>
        <GroupBody>
          <Big w={67} lines={['Fenster', 'wechseln ▾']} icon={<BigWindows />} />
        </GroupBody>
        <GroupLabel>Fenster</GroupLabel>
      </Group>
    </Ribbon>

    <Main>
      <LeftColumn>
        <DockHeader>
          Definition bearbeiten
          <DockIcons>
            <Icon name="menuDown" size={12} box={12} color="#333" />
            <Icon name="pin" size={12} box={12} color="#333" />
            <Icon name="maxBox" size={12} box={12} color="#333" />
          </DockIcons>
        </DockHeader>
        <EditPanel>
          <PanelScroll>
            <PanelContent>
              <SectionHead>Format<Icon name="chevrons" size={12} box={12} color="#10204c" /></SectionHead>
              <SectionBody $h={97} $top={5}>
                <FieldRow $h={26} $mb={5}>
                  <SquareButton><Icon name="gridBtn" size={20} /></SquareButton>
                  <Select $w={120} $ml={11}>ANSI (mm)<SelectArrow /></Select>
                </FieldRow>
                <FieldRow $h={21} $pl={1} $mb={6}>
                  <FieldLabel $w={79}>Textskalierung:</FieldLabel>
                  <Select $w={103}>1.00<SelectArrow /></Select>
                </FieldRow>
                <FieldRow $h={21} $pl={8}>
                  <FieldLabel $w={57}>Abrunden:</FieldLabel>
                  <Select $w={77} $kind="pressed">0,12<SelectArrow /></Select>
                </FieldRow>
              </SectionBody>
              <SectionHead>Eigenschaften<Icon name="chevrons" size={12} box={12} color="#10204c" /></SectionHead>
              <SectionBody $h={103} $top={6}>
                <FieldRow $h={26} $mb={5}>
                  <SquareButton><Icon name="pickDim" size={22} /></SquareButton>
                  <Select $w={129} $ml={4} $kind="off">Horizontal/Vertikal<SelectArrow $off /></Select>
                </FieldRow>
                <ButtonRow>
                  {['p1', 'p2', 'p3', 'p4', 'p5'].map((p) => (
                    <SquareButton key={p}><Icon name={p} size={22} /></SquareButton>
                  ))}
                </ButtonRow>
                <ButtonRow>
                  {['p6', 'p7', 'p8', 'p9', 'p10'].map((p) => (
                    <SquareButton key={p}><Icon name={p} size={22} /></SquareButton>
                  ))}
                </ButtonRow>
              </SectionBody>
              <SectionHead>Toleranz<Icon name="chevrons" size={12} box={12} color="#10204c" /></SectionHead>
              <SectionBody $h={60} $top={6}>
                <FieldRow $h={26} $mb={6}>
                  <SquareButton $dark><Icon name="tolX" size={18} /></SquareButton>
                  <SquareButton $dark $ml={53}><Icon name="tolOval" size={20} /></SquareButton>
                  <SquareButton $dark $ml={7}><Icon name="tolEdit" size={20} /></SquareButton>
                  <SquareButton $ml={6}><Icon name="tolWin" size={20} /></SquareButton>
                </FieldRow>
                <FieldRow $h={21} $pl={30}>
                  <FieldLabel $w={35} $off>Typ:</FieldLabel>
                  <Select $w={114} $kind="off"><span />
                    <SelectArrow $off />
                  </Select>
                </FieldRow>
              </SectionBody>
            </PanelContent>
          </PanelScroll>
          <PanelScrollbar>
            <ScrollButton><Arrow $dir="up" /></ScrollButton>
            <ScrollThumb />
            <ScrollFill />
            <ScrollButton><Arrow $dir="down" /></ScrollButton>
          </PanelScrollbar>
        </EditPanel>

        <LayerPanel>
          <LayerHeader>
            Layer
            <DockIcons>
              <Icon name="menuDown" size={12} box={12} color="#1c3f94" />
              <Icon name="pin" size={12} box={12} color="#1c3f94" />
              <Icon name="maxBox" size={12} box={12} color="#1c3f94" />
              <Icon name="closeX" size={12} box={12} color="#1c3f94" />
            </DockIcons>
          </LayerHeader>
          <LayerTabs>
            <LayerTab $w={24}><Icon name="ltBook" size={22} /></LayerTab>
            <LayerTab $w={24} $ml={10}><Icon name="ltSel" size={22} /></LayerTab>
            <LayerTab $w={24} $ml={9}><Icon name="ltHelp" size={22} /></LayerTab>
            <LayerTab $w={27} $ml={8} $active><Icon name="ltLayers" size={22} /></LayerTab>
          </LayerTabs>
          <LayerTools>
            <ToolButton><Icon name="layerNew" /></ToolButton>
            <ToolButton $ml={12}><Icon name="layerShow" /></ToolButton>
            <ToolButton $ml={4}><Icon name="layerHide" /></ToolButton>
            <ToolButton $ml={12}><Icon name="layerMove" /></ToolButton>
          </LayerTools>
          <Tree>
            <TreeRow $indent={8}>
              <Expander /><Dots $w={8} /><Icon name="treeModel" size={14} box={14} />
              <TreeLabel $ml={4}>2D Model</TreeLabel>
            </TreeRow>
            <TreeRow $indent={27}>
              <Expander /><Dots $w={6} /><Icon name="treeLayer" size={16} />
              <TreeLabel $ml={5}>Layer</TreeLabel>
            </TreeRow>
            <TreeRow $indent={52} $guide={16}>
              <Dots $w={11} /><Icon name="treeActive" size={15} />
              <TreeLabel $ml={3} $sel>Default</TreeLabel>
            </TreeRow>
            {treeItems.map((name, i) => (
              <TreeRow key={name} $indent={52} $guide={i === 2 ? 17 : 16}>
                <Dots $w={11} /><Icon name="treeItem" size={15} />
                <TreeLabel $ml={3}>{name}</TreeLabel>
              </TreeRow>
            ))}
          </Tree>
        </LayerPanel>
      </LeftColumn>

      <RightColumn>
        <CanvasRow>
          <Canvas>
            <svg width="1431" height="789" viewBox="232 143 1431 789" fill="none" stroke="#000" strokeWidth="1">
              <rect x="746.5" y="174.5" width="404" height="36" />
              <rect x="746.5" y="892.5" width="404" height="36" />
              <path d="M707.5 213.5H1153M707.5 889.5H1153" />
              <path d="M743.5 213.5V889.5M746.5 210.5V892.5M748.5 216.5V886M1150.5 210.5V892.5M1148.5 216.5V886M748.5 216.5H1148.5M748.5 885.5H1148.5" />
              <rect x="1153.5" y="213.5" width="36" height="676" />
              <path d="M707.5 213.5H653.5V889.5H707.5" stroke="#e020e0" />
              <path d="M707.5 213.5V889.5" stroke="#e0101c" />
              <circle cx="707" cy="213" r="3" fill="#000" stroke="none" />
              <circle cx="707" cy="889" r="3" fill="#000" stroke="none" />
              <circle cx="653.5" cy="551" r="3" fill="#000" stroke="none" />
            </svg>
          </Canvas>
          <VScroll>
            <VScrollEnd><Arrow $dir="up" /></VScrollEnd>
            <VThumb />
            <ScrollFill />
            <VScrollEnd><Arrow $dir="down" /></VScrollEnd>
          </VScroll>
        </CanvasRow>

        <SheetStrip>
          <SheetNav><Svg width="7" height="8" viewBox="0 0 7 8"><path d="M1 0v8M7 0L2 4l5 4z" stroke="#a0a2aa" fill="#a0a2aa" /></Svg></SheetNav>
          <SheetNav><Svg width="6" height="8" viewBox="0 0 6 8"><path d="M6 0L1 4l5 4z" fill="#a0a2aa" /></Svg></SheetNav>
          <SheetNav><Svg width="6" height="8" viewBox="0 0 6 8"><path d="M0 0l5 4-5 4z" fill="#a0a2aa" /></Svg></SheetNav>
          <SheetNav><Svg width="7" height="8" viewBox="0 0 7 8"><path d="M6 0v8M0 0l5 4-5 4z" stroke="#a0a2aa" fill="#a0a2aa" /></Svg></SheetNav>
          <SheetTab $w={79} $active>
            <svg width="79" height="16" viewBox="0 0 79 16"><path d="M0 0l8 15.5h63L79 0" fill="#fff" stroke="#111" /></svg>
            2D Model
          </SheetTab>
          <SheetTab $w={65} $ml={-8}>
            <svg width="65" height="16" viewBox="0 0 65 16"><path d="M0 15.5L8 .5h57l-8 15z" fill="#c8c8c8" stroke="#111" /></svg>
            Sheet1
          </SheetTab>
          <SheetFill />
          <HScroll>
            <Arrow $dir="left" />
            <HThumb />
            <Arrow $dir="right" />
          </HScroll>
          <Corner />
        </SheetStrip>

        <PromptHead>
          Aufforderungsleiste
          <PromptIcons>
            <Svg width="16" height="16" viewBox="0 0 16 16"><text x="1" y="14" fontSize="15" fontWeight="700" fill="#222" fontFamily="Liberation Serif">A</text><path d="M10 3l3-3 3 3z" fill="#2a6fd6" /></Svg>
            <Svg width="14" height="16" viewBox="0 0 14 16"><text x="1" y="14" fontSize="11" fontWeight="700" fill="#222" fontFamily="Liberation Serif">A</text><path d="M8 2h6l-3 3z" fill="#2a6fd6" /></Svg>
            <Icon name="chevrons" size={12} box={12} color="#111" />
            <Icon name="menuDown" size={12} box={12} color="#1c3f94" />
            <Icon name="pin" size={12} box={12} color="#1c3f94" />
          </PromptIcons>
        </PromptHead>
        <PromptText>Alt-Taste drücken und Verbindungsziehpunkte ziehen, um übergeordnete Geometrie zu ändern.</PromptText>
      </RightColumn>
    </Main>

    <StatusBar>
      <StartOrb />
      <SearchBox>Befehlssuche</SearchBox>
      <StatusIcons>
        <Icon name="redoGreen" />
        <Icon name="zoomArea" />
        <Icon name="zoomPM" />
        <Icon name="zoomBolt" />
        <Icon name="fitSm" />
        <Icon name="handWin" />
      </StatusIcons>
      <ZoomSlider>
        <SliderTrack />
        <SliderKnob />
        <ZoomCircle>−</ZoomCircle>
        <ZoomCircle>+</ZoomCircle>
      </ZoomSlider>
    </StatusBar>
  </Page>
);

export default App;
